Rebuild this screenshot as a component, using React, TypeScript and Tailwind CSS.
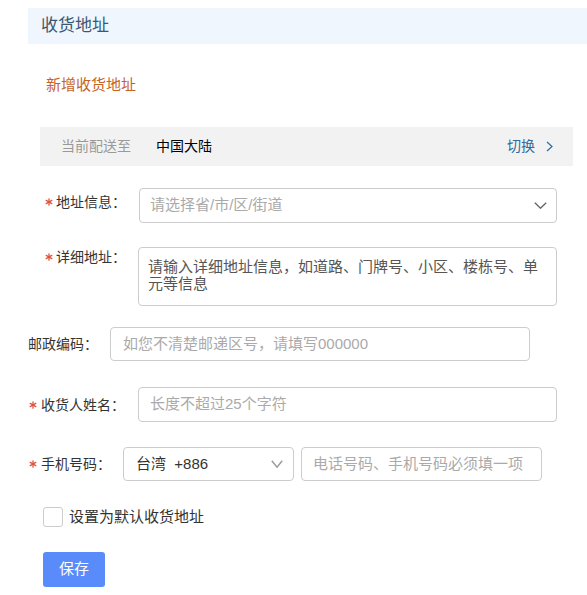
import React from 'react'

const Star = () => (
  <svg width="8" height="8" viewBox="0 0 8 8" className="shrink-0">
    <g stroke="#e0533a" strokeWidth="1.3" strokeLinecap="round">
      <line x1="4" y1="0.8" x2="4" y2="7.2" />
      <line x1="1.2" y1="2.4" x2="6.8" y2="5.6" />
      <line x1="1.2" y1="5.6" x2="6.8" y2="2.4" />
    </g>
  </svg>
)

const Chevron = ({ w = 13, h = 7, color = '#666' }: { w?: number; h?: number; color?: string }) => (
  <svg width={w} height={h} viewBox={`0 0 ${w} ${h}`}>
    <polyline points={`0.8,0.8 ${w / 2},${h - 0.8} ${w - 0.8},0.8`} fill="none" stroke={color} strokeWidth="1.4" />
  </svg>
)

export default function App() {
  return (
    <div className="w-[587px] h-[595px] bg-white overflow-hidden text-[#333] font-['Liberation_Sans','Noto_Sans_CJK_SC',sans-serif]">
      {/* 标题 */}
      <div className="mt-[8px] ml-[28px] h-[36px] bg-[#eff6fd] flex items-center pl-[13px] text-[17px] text-[#3b5873]">
        收货地址
      </div>

      <div className="mt-[31px] ml-[46px] h-[20px] leading-[20px] text-[15px] text-[#c5641f]">新增收货地址</div>

      {/* 配送地区 */}
      <div className="mt-[32px] ml-[40px] w-[533px] h-[39px] bg-[#f2f2f2] flex items-center pl-[21px] pr-[20px] text-[14px]">
        <span className="text-[#999]">当前配送至</span>
        <span className="ml-[25px] text-black">中国大陆</span>
        <span className="ml-auto flex items-center text-[#2f6aa0]">
          切换
          <svg width="7" height="11" viewBox="0 0 7 11" className="ml-[11px]">
            <polyline points="1,1 6,5.5 1,10" fill="none" stroke="#2f6aa0" strokeWidth="1.2" />
          </svg>
        </span>
      </div>

      {/* 地址信息 */}
      <div className="mt-[22px] pl-[41px] flex">
        <div className="w-[15px] h-[28px] flex items-center justify-center">
          <Star />
        </div>
        <div className="w-[83px] pt-[4px] leading-[20px] text-[14px]">地址信息：</div>
        <div className="w-[418px] h-[35px] border border-[#ccc] rounded-[4px] flex items-center justify-between pl-[10px] pr-[9px] text-[15px] text-[#aaa]">
          <span>请选择省/市/区/街道</span>
          <Chevron w={13} h={7} color="#666" />
        </div>
      </div>

      {/* 详细地址 */}
      <div className="mt-[24px] pl-[41px] flex">
        <div className="w-[15px] h-[20px] flex items-center justify-center">
          <Star />
        </div>
        <div className="w-[82px] leading-[20px] text-[14px]">详细地址：</div>
        <div className="w-[419px] h-[59px] border border-[#ccc] rounded-[4px] pl-[9px] pr-[8px] pt-[10px] leading-[17px] text-[15px] text-[#555]">
          请输入详细地址信息，如道路、门牌号、小区、楼栋号、单元等信息
        </div>
      </div>

      {/* 邮政编码 */}
      <div className="mt-[21px] pl-[28px] flex items-center">
        <div className="w-[82px] leading-[20px] text-[14px]">邮政编码：</div>
        <div className="w-[420px] h-[34px] border border-[#ccc] rounded-[4px] flex items-center pl-[12px] text-[15px] text-[#aaa]">
          如您不清楚邮递区号，请填写000000
        </div>
      </div>

      {/* 收货人姓名 */}
      <div className="mt-[26px] pl-[25px] flex items-center">
        <div className="w-[16px] flex items-center justify-center">
          <Star />
        </div>
        <div className="w-[97px] leading-[20px] text-[14px]">收货人姓名：</div>
        <div className="w-[419px] h-[35px] border border-[#ccc] rounded-[4px] flex items-center pl-[11px] text-[15px] text-[#aaa]">
          长度不超过25个字符
        </div>
      </div>

      {/* 手机号码 */}
      <div className="mt-[25px] pl-[25px] flex items-center">
        <div className="w-[16px] flex items-center justify-center">
          <Star />
        </div>
        <div className="w-[82px] leading-[20px] text-[14px]">手机号码：</div>
        <div className="w-[171px] h-[34px] border border-[#ccc] rounded-[4px] flex items-center justify-between pl-[12px] pr-[10px] text-[15px] text-[#333]">
          <span>台湾&nbsp;&nbsp;+886</span>
          <Chevron w={12} h={8} color="#999" />
        </div>
        <div className="ml-[7px] w-[241px] h-[34px] border border-[#ccc] rounded-[4px] flex items-center pl-[11px] text-[15px] text-[#aaa]">
          电话号码、手机号码必须填一项
        </div>
      </div>

      {/* 默认地址 */}
      <div className="mt-[26px] pl-[43px] flex items-center">
        <div className="w-[20px] h-[20px] border border-[#ccc] rounded-[3px] bg-white" />
        <span className="ml-[6px] leading-[20px] text-[15px]">设置为默认收货地址</span>
      </div>

      <button className="mt-[25px] ml-[43px] w-[62px] h-[35px] bg-[#5a8bfa] rounded-[3px] text-white text-[15px] flex items-center justify-center">
        保存
      </button>
    </div>
  )
}
